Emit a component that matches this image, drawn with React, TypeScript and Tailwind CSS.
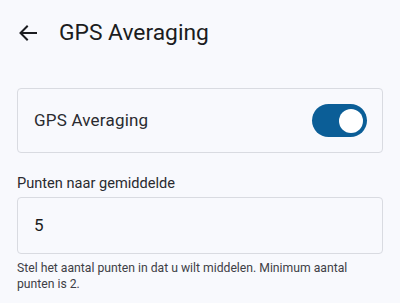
import { useState } from 'react'

export default function App() {
  const [on, setOn] = useState(true)

  return (
    <div className="h-[303px] w-[400px] overflow-hidden bg-[#f8f9fd] text-[#1b1c20]" style={{ fontFamily: 'Roboto, sans-serif' }}>
      <header className="flex h-[66px] items-center pl-[16px]">
        <button className="flex h-[24px] w-[24px] items-center justify-center">
          <svg width="24" height="24" viewBox="0 0 24 24" fill="none" stroke="#1b1c20" strokeWidth="2" strokeLinecap="square">
            <path d="M20 12H5M11 5.5 4.5 12l6.5 6.5" />
          </svg>
        </button>
        <h1 className="ml-[19px] text-[22.8px] leading-[28px]">GPS Averaging</h1>
      </header>

      <div className="px-[17px] pt-[22px]">
        <div className="flex h-[65px] items-center justify-between rounded-[4px] border border-[#d9dbe1] pl-[16px] pr-[15px]">
          <span className="text-[17px] tracking-[0.2px] text-[#2a2b30]">GPS Averaging</span>
          <button
            onClick={() => setOn(!on)}
            className={`flex h-[33px] w-[55px] items-center rounded-full px-[4px] ${on ? 'justify-end bg-[#0b5e97]' : 'justify-start bg-[#dfe2e8]'}`}
          >
            <span className="h-[24px] w-[24px] rounded-full bg-white" />
          </button>
        </div>

        <label className="mt-[19px] block text-[14.6px] leading-[22px] text-[#2a2b30]">Punten naar gemiddelde</label>
        <div className="mt-[3px] flex h-[57px] items-center rounded-[4px] border border-[#d9dbe1] px-[16px]">
          <span className="text-[17px]">5</span>
        </div>
        <p className="mt-[6px] pr-[10px] text-[12.2px] leading-[16px] text-[#3e4046]">
          Stel het aantal punten in dat u wilt middelen. Minimum aantal punten is 2.
        </p>
      </div>
    </div>
  )
}
